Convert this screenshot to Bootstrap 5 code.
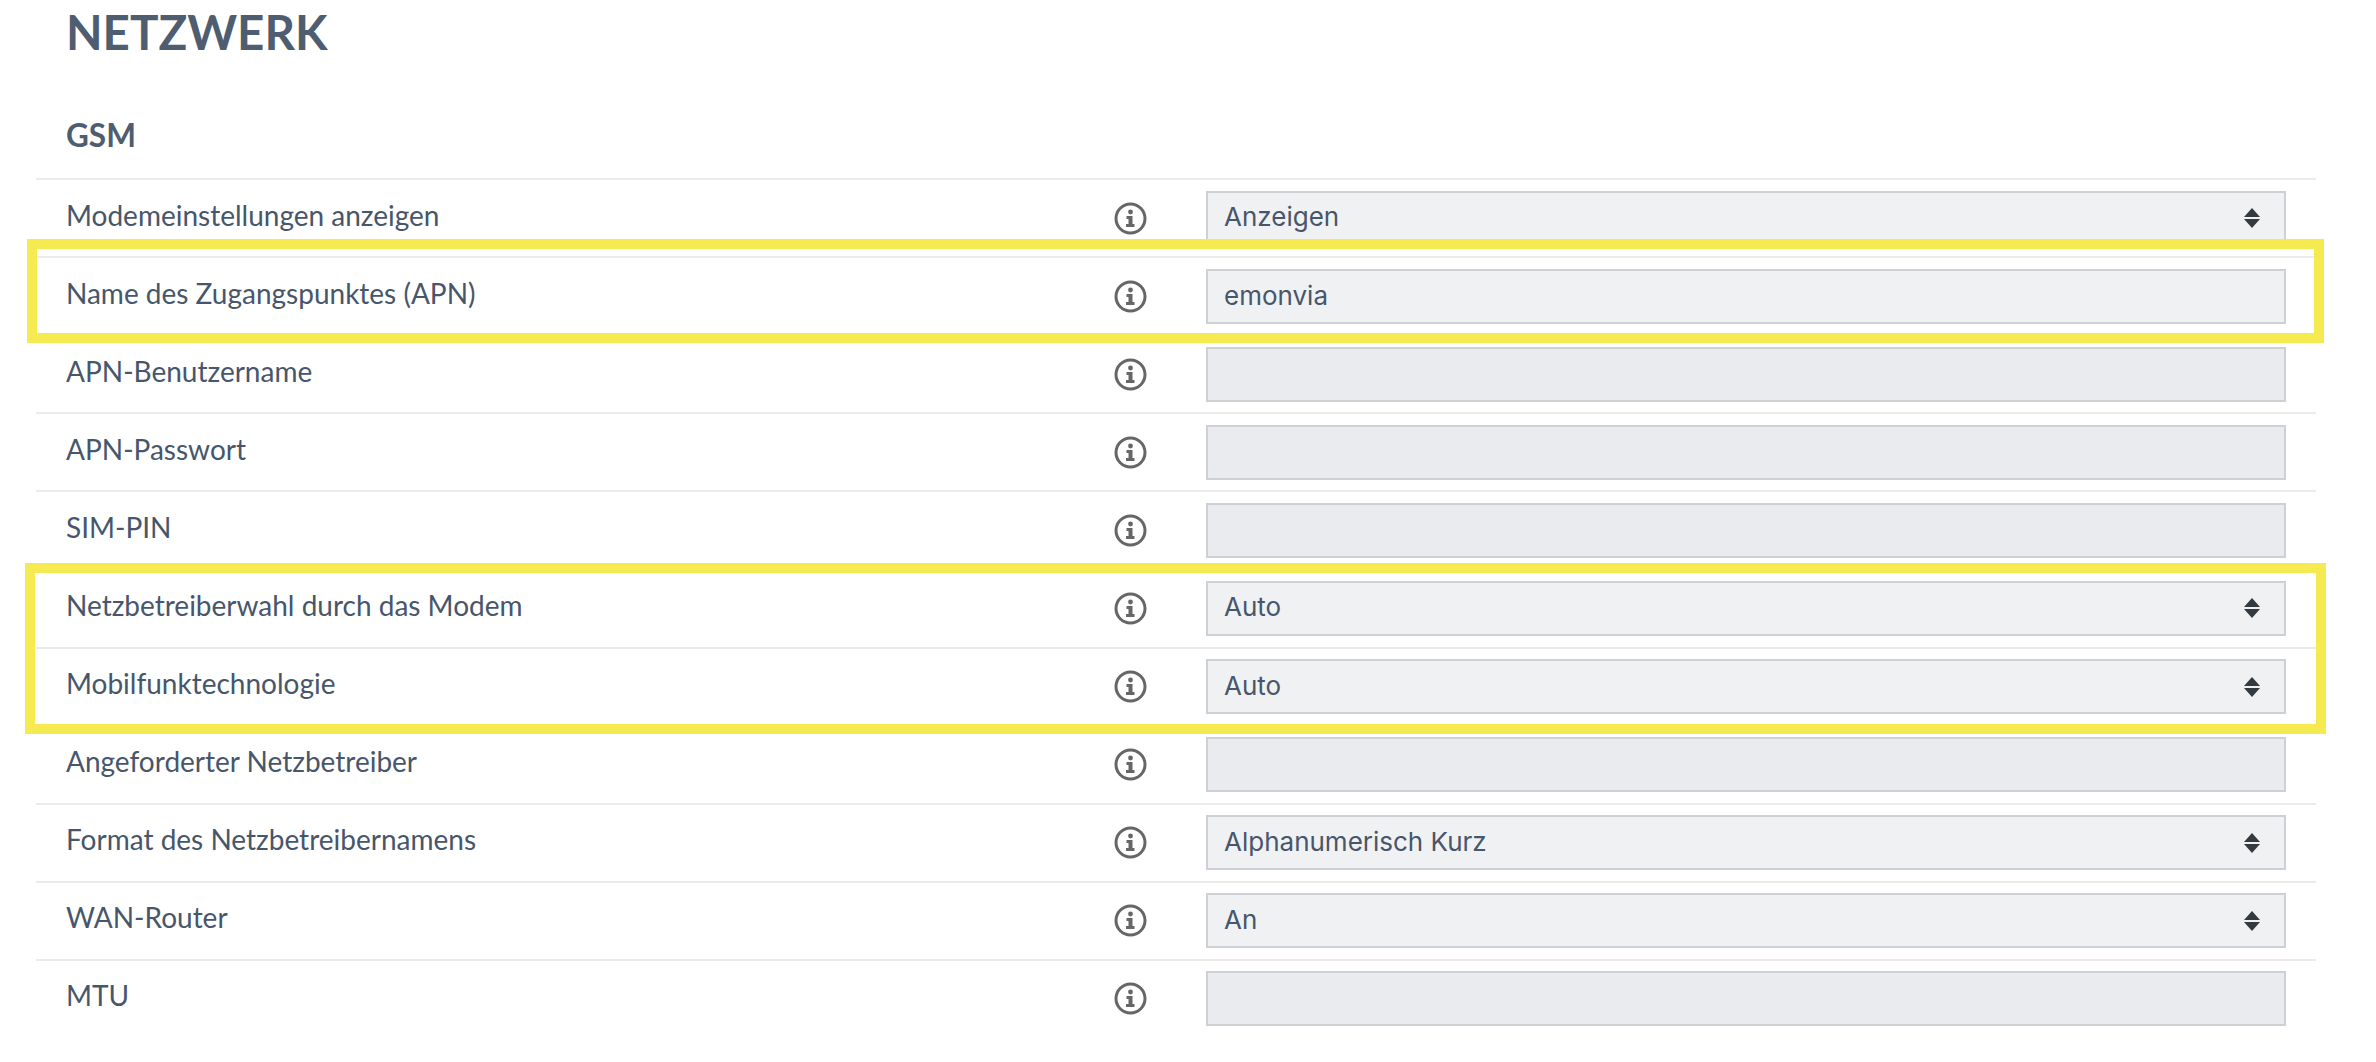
<!DOCTYPE html>
<html lang="de">
<head>
    <meta charset="UTF-8">
    <meta name="viewport" content="width=device-width, initial-scale=1.0">
    <title>Netzwerk</title>
    <link href="https://cdn.jsdelivr.net/npm/bootstrap@5.3.0/dist/css/bootstrap.min.css" rel="stylesheet">
    <script src="https://cdn.jsdelivr.net/npm/bootstrap@5.3.0/dist/js/bootstrap.bundle.min.js"></script>
    <style>
        html, body { height: 1062px; overflow: hidden; }
        body { background: #fff; color: #47566b; font-family: Lato, sans-serif; font-size: 28px; }
        .page-wrap { padding: 0 60px 0 36px; position: relative; }
        .page-title { font-family: Lato, sans-serif; font-weight: 700; font-size: 47.5px; line-height: 64px; color: #4e5d6f; margin: 0 0 0 30px; }
        .group-title { font-weight: 700; font-size: 31.5px; line-height: 44px; color: #4e5d6f; margin: 49px 0 0 30px; height: 65px; }
        .setting-row { border-top: 2px solid #ebebec; padding: 10px 30px 10.1px 30px; height: 78.1px; }
        .setting-label { flex: 1 1 auto; line-height: 52px; margin-top: -7px; }
        .info-ico { width: 33px; height: 33px; margin-right: 59px; flex: none; color: #666; }
        .setting-input.form-control, .setting-input.form-select {
            width: 1080px; flex: none; height: 55px; border: 2px solid #cdd0d4; border-radius: 0; background-color: #f0f1f3;
            color: #47566b; font-size: 26px; padding: 0 16px 2px; line-height: 48px; font-family: Inter, sans-serif; box-shadow: none;
        }
        .setting-input.form-select {
            background-image: url("data:image/svg+xml,%3Csvg xmlns='http://www.w3.org/2000/svg' width='16' height='20'%3E%3Cpath fill='%23333a40' d='M8 0l8 9H0zM0 11h16l-8 9z'/%3E%3C/svg%3E");
            background-size: 16px 20px; background-position: right 24px center; background-repeat: no-repeat;
        }
        .setting-input.form-control:disabled { background-color: #e9ebee; opacity: 1; }
        .yellow-box { position: absolute; border: 10px solid #f5ea4f; pointer-events: none; }
        .box-a { left: 27px; top: 239px; width: 2297px; height: 104px; }
        .box-b { left: 25px; top: 563px; width: 2301px; height: 171px; }
    </style>
</head>
<body>
    <div class="page-wrap">
        <h1 class="page-title">NETZWERK</h1>
        <h2 class="group-title">GSM</h2>
        <div id="rows"></div>
    </div>
    <div class="yellow-box box-a"></div>
    <div class="yellow-box box-b"></div>

    <script>
        const settings = [
            ["Modemeinstellungen anzeigen", "select", "Anzeigen"],
            ["Name des Zugangspunktes (APN)", "text", "emonvia"],
            ["APN-Benutzername", "off", ""],
            ["APN-Passwort", "off", ""],
            ["SIM-PIN", "off", ""],
            ["Netzbetreiberwahl durch das Modem", "select", "Auto"],
            ["Mobilfunktechnologie", "select", "Auto"],
            ["Angeforderter Netzbetreiber", "off", ""],
            ["Format des Netzbetreibernamens", "select", "Alphanumerisch Kurz"],
            ["WAN-Router", "select", "An"],
            ["MTU", "off", ""]
        ];
        const icon = `<svg class="info-ico" viewBox="0 0 33 33"><circle cx="16.5" cy="16.5" r="14.5" fill="none" stroke="currentColor" stroke-width="3"/><circle cx="16.5" cy="10" r="2.4" fill="currentColor"/><path fill="currentColor" d="M12.5 14h6v8h2v3h-8.5v-3h2.5v-5h-2z"/></svg>`;
        document.getElementById("rows").innerHTML = settings.map(([label, type, value]) => {
            let field;
            if (type === "select") {
                field = `<select class="form-select setting-input"><option>${value}</option></select>`;
            } else if (type === "text") {
                field = `<input type="text" class="form-control setting-input" value="${value}">`;
            } else {
                field = `<input type="text" class="form-control setting-input" disabled>`;
            }
            return `<div class="setting-row d-flex align-items-center"><div class="setting-label">${label}</div>${icon}${field}</div>`;
        }).join("");
    </script>
</body>
</html>
